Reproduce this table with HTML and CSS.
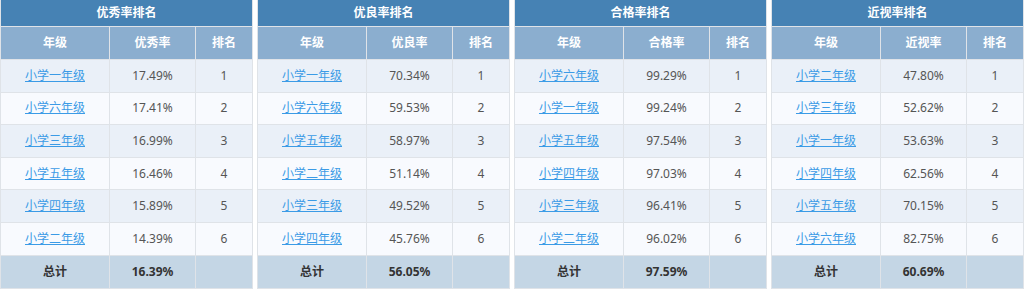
FILE: index.html
```html
<!DOCTYPE html>
<html lang="zh-CN">
<head>
<meta charset="utf-8">
<title>排名</title>
<link rel="stylesheet" href="styles.css">
</head>
<body>
<div class="boards">
  <table class="rank">
    <colgroup><col class="c1"><col class="c2"><col class="c3"></colgroup>
    <thead>
      <tr><th colspan="3" class="title">优秀率排名</th></tr>
      <tr class="head"><th>年级</th><th>优秀率</th><th>排名</th></tr>
    </thead>
    <tbody>
      <tr><td><a href="#">小学一年级</a></td><td>17.49%</td><td>1</td></tr>
      <tr><td><a href="#">小学六年级</a></td><td>17.41%</td><td>2</td></tr>
      <tr><td><a href="#">小学三年级</a></td><td>16.99%</td><td>3</td></tr>
      <tr><td><a href="#">小学五年级</a></td><td>16.46%</td><td>4</td></tr>
      <tr><td><a href="#">小学四年级</a></td><td>15.89%</td><td>5</td></tr>
      <tr><td><a href="#">小学二年级</a></td><td>14.39%</td><td>6</td></tr>
    </tbody>
    <tfoot>
      <tr><td>总计</td><td>16.39%</td><td></td></tr>
    </tfoot>
  </table>

  <table class="rank">
    <colgroup><col class="c1"><col class="c2"><col class="c3"></colgroup>
    <thead>
      <tr><th colspan="3" class="title">优良率排名</th></tr>
      <tr class="head"><th>年级</th><th>优良率</th><th>排名</th></tr>
    </thead>
    <tbody>
      <tr><td><a href="#">小学一年级</a></td><td>70.34%</td><td>1</td></tr>
      <tr><td><a href="#">小学六年级</a></td><td>59.53%</td><td>2</td></tr>
      <tr><td><a href="#">小学五年级</a></td><td>58.97%</td><td>3</td></tr>
      <tr><td><a href="#">小学二年级</a></td><td>51.14%</td><td>4</td></tr>
      <tr><td><a href="#">小学三年级</a></td><td>49.52%</td><td>5</td></tr>
      <tr><td><a href="#">小学四年级</a></td><td>45.76%</td><td>6</td></tr>
    </tbody>
    <tfoot>
      <tr><td>总计</td><td>56.05%</td><td></td></tr>
    </tfoot>
  </table>

  <table class="rank">
    <colgroup><col class="c1"><col class="c2"><col class="c3"></colgroup>
    <thead>
      <tr><th colspan="3" class="title">合格率排名</th></tr>
      <tr class="head"><th>年级</th><th>合格率</th><th>排名</th></tr>
    </thead>
    <tbody>
      <tr><td><a href="#">小学六年级</a></td><td>99.29%</td><td>1</td></tr>
      <tr><td><a href="#">小学一年级</a></td><td>99.24%</td><td>2</td></tr>
      <tr><td><a href="#">小学五年级</a></td><td>97.54%</td><td>3</td></tr>
      <tr><td><a href="#">小学四年级</a></td><td>97.03%</td><td>4</td></tr>
      <tr><td><a href="#">小学三年级</a></td><td>96.41%</td><td>5</td></tr>
      <tr><td><a href="#">小学二年级</a></td><td>96.02%</td><td>6</td></tr>
    </tbody>
    <tfoot>
      <tr><td>总计</td><td>97.59%</td><td></td></tr>
    </tfoot>
  </table>

  <table class="rank">
    <colgroup><col class="c1"><col class="c2"><col class="c3"></colgroup>
    <thead>
      <tr><th colspan="3" class="title">近视率排名</th></tr>
      <tr class="head"><th>年级</th><th>近视率</th><th>排名</th></tr>
    </thead>
    <tbody>
      <tr><td><a href="#">小学二年级</a></td><td>47.80%</td><td>1</td></tr>
      <tr><td><a href="#">小学三年级</a></td><td>52.62%</td><td>2</td></tr>
      <tr><td><a href="#">小学一年级</a></td><td>53.63%</td><td>3</td></tr>
      <tr><td><a href="#">小学四年级</a></td><td>62.56%</td><td>4</td></tr>
      <tr><td><a href="#">小学五年级</a></td><td>70.15%</td><td>5</td></tr>
      <tr><td><a href="#">小学六年级</a></td><td>82.75%</td><td>6</td></tr>
    </tbody>
    <tfoot>
      <tr><td>总计</td><td>60.69%</td><td></td></tr>
    </tfoot>
  </table>
</div>
</body>
</html>
```

FILE: styles.css
```css
html, body {
  margin: 0;
  padding: 0;
  background: #ffffff;
}

body {
  font-family: "Noto Sans", "Noto Sans CJK SC", sans-serif;
  font-size: 12px;
  color: #555555;
}

.boards {
  display: grid;
  grid-template-columns: repeat(4, 252px);
  column-gap: 5px;
  align-items: start;
}

.rank {
  width: 252px;
  border-collapse: collapse;
  table-layout: fixed;
}

.rank .c1 { width: 109px; }
.rank .c2 { width: 86px; }
.rank .c3 { width: 57px; }

.rank th,
.rank td {
  border: 1px solid #dfe3e8;
  padding: 0;
  text-align: center;
  vertical-align: middle;
  line-height: 16px;
}

.rank .title {
  background: #4682b4;
  color: #ffffff;
  font-weight: bold;
  height: 26px;
  border-top: 0;
}

.rank .head th {
  background: #8baecf;
  color: #ffffff;
  font-weight: bold;
  height: 32px;
}

.rank tbody td {
  height: 31.6px;
}

.rank tbody tr:nth-child(odd) td {
  background: #eaf0f8;
}

.rank tbody tr:nth-child(even) td {
  background: #f8fafe;
}

.rank tbody a {
  color: #3b9be6;
  text-decoration: underline;
}

.rank tfoot td {
  background: #c4d6e5;
  color: #333333;
  font-weight: bold;
  height: 32px;
}
```
